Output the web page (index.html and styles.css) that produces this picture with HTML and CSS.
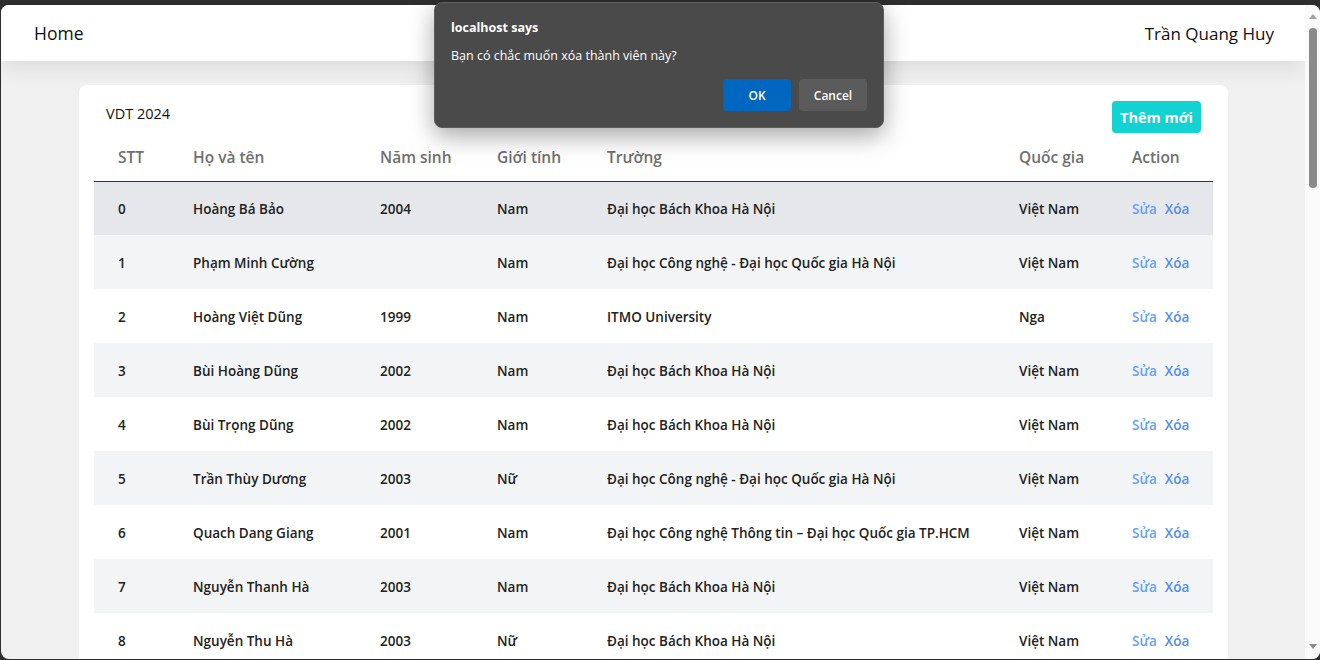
FILE: index.html
```html
<!DOCTYPE html>
<html lang="vi">
<head>
<meta charset="utf-8">
<title>VDT 2024</title>
<link rel="stylesheet" href="styles.css">
</head>
<body>
<div class="window">
  <div class="viewport">
    <header class="topbar">
      <span class="brand">Home</span>
      <span class="user">Trần Quang Huy</span>
    </header>
    <main class="page">
      <section class="card">
        <div class="card-head">
          <h1 class="card-title">VDT 2024</h1>
          <button class="btn-add">Thêm mới</button>
        </div>
        <table class="members">
          <colgroup>
            <col class="c-stt"><col class="c-name"><col class="c-year"><col class="c-sex"><col class="c-school"><col class="c-country"><col class="c-action">
          </colgroup>
          <thead>
            <tr><th>STT</th><th>Họ và tên</th><th>Năm sinh</th><th>Giới tính</th><th>Trường</th><th>Quốc gia</th><th>Action</th></tr>
          </thead>
          <tbody>
            <tr class="hover"><td>0</td><td>Hoàng Bá Bảo</td><td>2004</td><td>Nam</td><td>Đại học Bách Khoa Hà Nội</td><td>Việt Nam</td><td><a class="edit">Sửa</a><a class="del">Xóa</a></td></tr>
            <tr><td>1</td><td>Phạm Minh Cường</td><td></td><td>Nam</td><td>Đại học Công nghệ - Đại học Quốc gia Hà Nội</td><td>Việt Nam</td><td><a class="edit">Sửa</a><a class="del">Xóa</a></td></tr>
            <tr><td>2</td><td>Hoàng Việt Dũng</td><td>1999</td><td>Nam</td><td>ITMO University</td><td>Nga</td><td><a class="edit">Sửa</a><a class="del">Xóa</a></td></tr>
            <tr><td>3</td><td>Bùi Hoàng Dũng</td><td>2002</td><td>Nam</td><td>Đại học Bách Khoa Hà Nội</td><td>Việt Nam</td><td><a class="edit">Sửa</a><a class="del">Xóa</a></td></tr>
            <tr><td>4</td><td>Bùi Trọng Dũng</td><td>2002</td><td>Nam</td><td>Đại học Bách Khoa Hà Nội</td><td>Việt Nam</td><td><a class="edit">Sửa</a><a class="del">Xóa</a></td></tr>
            <tr><td>5</td><td>Trần Thùy Dương</td><td>2003</td><td>Nữ</td><td>Đại học Công nghệ - Đại học Quốc gia Hà Nội</td><td>Việt Nam</td><td><a class="edit">Sửa</a><a class="del">Xóa</a></td></tr>
            <tr><td>6</td><td>Quach Dang Giang</td><td>2001</td><td>Nam</td><td>Đại học Công nghệ Thông tin – Đại học Quốc gia TP.HCM</td><td>Việt Nam</td><td><a class="edit">Sửa</a><a class="del">Xóa</a></td></tr>
            <tr><td>7</td><td>Nguyễn Thanh Hà</td><td>2003</td><td>Nam</td><td>Đại học Bách Khoa Hà Nội</td><td>Việt Nam</td><td><a class="edit">Sửa</a><a class="del">Xóa</a></td></tr>
            <tr><td>8</td><td>Nguyễn Thu Hà</td><td>2003</td><td>Nữ</td><td>Đại học Bách Khoa Hà Nội</td><td>Việt Nam</td><td><a class="edit">Sửa</a><a class="del">Xóa</a></td></tr>
          </tbody>
        </table>
      </section>
    </main>
  </div>
  <div class="scrollbar">
    <span class="arrow up"></span>
    <span class="thumb"></span>
    <span class="track-fill"></span>
    <span class="arrow down"></span>
  </div>
</div>

<div class="dialog" role="alertdialog">
  <div class="dialog-title">localhost says</div>
  <div class="dialog-msg">Bạn có chắc muốn xóa thành viên này?</div>
  <div class="dialog-actions">
    <button class="dlg-btn ok">OK</button>
    <button class="dlg-btn cancel">Cancel</button>
  </div>
</div>
</body>
</html>
```

FILE: styles.css
```css
* { box-sizing: border-box; }

html, body {
  margin: 0;
  height: 100%;
}

body {
  background: #2e2e2e;
  font-family: "Open Sans", "Noto Sans", sans-serif;
  padding: 5px 0 1px 1px;
  overflow: hidden;
}

.window {
  display: flex;
  height: 654px;
  background: #f0f0f0;
  border-radius: 8px;
  overflow: hidden;
}

.viewport {
  flex: 1;
  display: flex;
  flex-direction: column;
  overflow: hidden;
}

.topbar {
  flex: none;
  height: 56px;
  background: #fff;
  display: flex;
  align-items: center;
  justify-content: space-between;
  padding: 0 31px 0 33px;
  font-size: 17.5px;
  color: #111;
  box-shadow: 0 6px 22px rgba(0, 0, 0, 0.09);
  position: relative;
  z-index: 1;
}

.user { font-size: 17px; }

.page {
  flex: 1;
  padding: 24px 77px 0 78px;
}

.card {
  background: #fff;
  border-radius: 8px 8px 0 0;
  padding: 16px 15px 0 15px;
}

.card-head {
  display: flex;
  justify-content: space-between;
  align-items: flex-start;
  padding: 0 12px;
}

.card-title {
  margin: 0;
  padding-top: 3px;
  font-size: 14.5px;
  font-weight: 400;
  color: #111;
  line-height: 20px;
}

.btn-add {
  height: 32px;
  padding: 0 8px;
  border: none;
  border-radius: 4px;
  background: #13d2d2;
  color: #fff;
  font-family: inherit;
  font-size: 14.5px;
  font-weight: 700;
}

.members {
  width: 100%;
  table-layout: fixed;
  border-collapse: collapse;
}

.c-stt { width: 75px; }
.c-name { width: 187px; }
.c-year { width: 117px; }
.c-sex { width: 110px; }
.c-school { width: 412px; }
.c-country { width: 113px; }
.c-action { width: 105px; }

.members th {
  height: 48px;
  padding: 0 0 0 24px;
  text-align: left;
  font-size: 15.5px;
  font-weight: 600;
  color: #6f6f6f;
  border-bottom: 1px solid #333;
  white-space: nowrap;
}

.members td {
  height: 54px;
  padding: 2px 0 0 24px;
  font-size: 13.5px;
  font-weight: 600;
  color: #222;
  white-space: nowrap;
}

.members tbody tr:nth-child(even) { background: #f3f4f6; }
.members tbody tr.hover { background: #e5e7eb; }

.edit, .del {
  font-weight: 600;
  cursor: pointer;
}
.edit { color: #64a1f8; margin-right: 8px; }
.del { color: #4f8ef2; }

/* fake browser scrollbar */
.scrollbar {
  flex: none;
  width: 15px;
  background: #fafafa;
  display: flex;
  flex-direction: column;
  align-items: center;
}

.arrow {
  flex: none;
  width: 0;
  height: 0;
  border-left: 4px solid transparent;
  border-right: 4px solid transparent;
}
.arrow.up {
  margin-top: 9px;
  border-bottom: 5px solid #a3a3a3;
}
.arrow.down {
  margin-bottom: 10px;
  border-top: 5px solid #8a8a8a;
}

.thumb {
  flex: none;
  width: 8px;
  height: 160px;
  margin-top: 9px;
  border-radius: 4px;
  background: #8a8a8a;
}

.track-fill { flex: 1; }

/* native confirm dialog overlay */
.dialog {
  position: absolute;
  left: 434px;
  top: 2px;
  width: 450px;
  height: 126px;
  background: #4a4a4a;
  border: 1px solid #5e5e5e;
  border-radius: 8px;
  box-shadow: 0 8px 24px rgba(0, 0, 0, 0.35);
  padding: 16px 16px 0 16px;
  font-family: "Open Sans", "Noto Sans", sans-serif;
  color: #fff;
  z-index: 10;
}

.dialog-title {
  font-size: 12.5px;
  font-weight: 700;
  line-height: 18px;
}

.dialog-msg {
  margin-top: 10px;
  font-size: 12.5px;
  line-height: 18px;
}

.dialog-actions {
  display: flex;
  justify-content: flex-end;
  gap: 8px;
  margin-top: 14px;
}

.dlg-btn {
  width: 68px;
  height: 32px;
  border: none;
  border-radius: 4px;
  color: #fff;
  font-family: inherit;
  font-size: 12px;
  font-weight: 600;
}
.dlg-btn.ok { background: #0067c0; }
.dlg-btn.cancel { background: #5b5b5b; }
```
